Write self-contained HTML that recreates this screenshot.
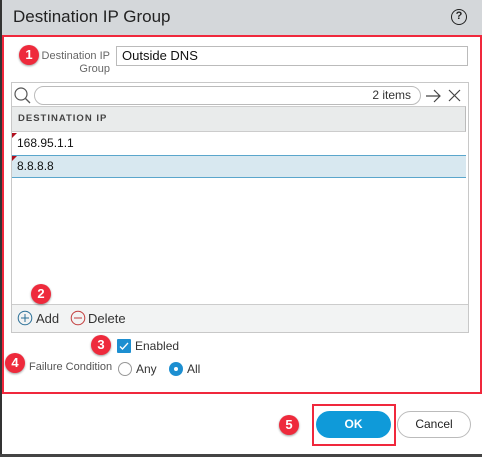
<!DOCTYPE html>
<html><head><style>
*{box-sizing:border-box;margin:0;padding:0}
body{width:482px;height:457px;position:relative;background:#fff;font-family:"Liberation Sans",sans-serif;overflow:hidden}
.a{position:absolute}
.badge{position:absolute;width:20px;height:20px;border-radius:50%;background:#ee2a3c;color:#fff;font-weight:bold;font-size:13px;text-align:center;line-height:20px;box-shadow:0 1px 2px rgba(0,0,0,.4)}
</style></head><body>
<div class="a" style="left:0;top:0;width:482px;height:35px;background:#d4d7da"></div>
<div class="a" style="left:13px;top:7px;font-size:17px;color:#222">Destination IP Group</div>
<div class="a" style="left:451px;top:9px;width:16px;height:16px;border:1.5px solid #222;border-radius:50%;font-size:11px;font-weight:bold;text-align:center;line-height:13px;color:#222">?</div>
<div class="a" style="left:0;top:0;width:2px;height:457px;background:#333"></div>
<div class="a" style="left:0;top:454px;width:482px;height:3px;background:#444"></div>
<div class="a" style="left:2px;top:35px;width:480px;height:359px;border:2.5px solid #f0283c"></div>
<div class="badge" style="left:19px;top:45px">1</div>
<div class="a" style="left:30px;top:50px;width:80px;text-align:right;font-size:11px;line-height:13px;color:#666">Destination IP<br>Group</div>
<div class="a" style="left:116px;top:46px;width:352px;height:20px;border:1px solid #bbb;font-size:13px;line-height:18px;padding-left:5px;color:#111">Outside DNS</div>
<div class="a" style="left:11px;top:82px;width:458px;height:251px;border:1px solid #c8c8c8"></div>
<svg class="a" style="left:13px;top:86px" width="20" height="20"><circle cx="8" cy="8" r="6" fill="none" stroke="#555" stroke-width="1.2"/><line x1="12.5" y1="12.5" x2="17" y2="17" stroke="#555" stroke-width="1.3"/></svg>
<div class="a" style="left:34px;top:86px;width:387px;height:19px;border:1px solid #bbb;border-radius:10px;font-size:12px;line-height:17px;text-align:right;padding-right:9px;color:#333">2 items</div>
<svg class="a" style="left:424px;top:87px" width="46" height="18"><path d="M2 9h14M10 3l6 6-6 6" fill="none" stroke="#444" stroke-width="1.2"/><path d="M25 3l11 11M36 3l-11 11" stroke="#444" stroke-width="1.2"/></svg>
<div class="a" style="left:12px;top:106px;width:454px;height:26px;background:#e9ebeb;border-top:1px solid #ccc;border-bottom:1px solid #ccc;border-right:1px solid #bbb;font-size:9.5px;font-weight:bold;letter-spacing:1px;color:#444;line-height:24px;padding-left:6px">DESTINATION IP</div>
<div class="a" style="left:12px;top:132px;width:454px;height:23px;font-size:12px;line-height:23px;padding-left:5px;color:#111">168.95.1.1</div>
<div class="a" style="left:12px;top:155px;width:454px;height:23px;background:#d8e8f0;border-top:1px solid #5aa6cc;border-bottom:1px solid #5aa6cc;font-size:12px;line-height:21px;padding-left:5px;color:#111">8.8.8.8</div>
<svg class="a" style="left:12px;top:133px" width="5" height="5"><path d="M0 0h5L0 5z" fill="#b0101e"/></svg>
<svg class="a" style="left:12px;top:156px" width="5" height="5"><path d="M0 0h5L0 5z" fill="#b0101e"/></svg>
<div class="a" style="left:12px;top:304px;width:456px;height:28px;background:#f2f3f3;border-top:1px solid #ccc"></div>
<svg class="a" style="left:17px;top:310px" width="16" height="16"><circle cx="8" cy="8" r="6.8" fill="none" stroke="#2a6f97" stroke-width="1"/><path d="M8 4v8M4 8h8" stroke="#2a6f97" stroke-width="1"/></svg>
<div class="a" style="left:36px;top:311px;font-size:13px;color:#333">Add</div>
<svg class="a" style="left:70px;top:310px" width="16" height="16"><circle cx="8" cy="8" r="6.8" fill="none" stroke="#c23b3b" stroke-width="1"/><path d="M4 8h8" stroke="#c23b3b" stroke-width="1"/></svg>
<div class="a" style="left:88px;top:311px;font-size:13px;color:#333">Delete</div>
<div class="badge" style="left:31px;top:284px">2</div>
<div class="badge" style="left:91px;top:335px">3</div>
<div class="a" style="left:117px;top:339px;width:14px;height:14px;background:#1d8fd1;border-radius:1px"></div>
<svg class="a" style="left:117px;top:339px" width="14" height="14"><path d="M3 7.5l2.5 2.5L11 4" fill="none" stroke="#fff" stroke-width="1.3"/></svg>
<div class="a" style="left:135px;top:339px;font-size:12px;color:#333">Enabled</div>
<div class="badge" style="left:5px;top:353px">4</div>
<div class="a" style="left:29px;top:361px;font-size:11px;color:#555">Failure Condition</div>
<div class="a" style="left:118px;top:362px;width:14px;height:14px;border:1px solid #999;border-radius:50%"></div>
<div class="a" style="left:136px;top:362px;font-size:12px;color:#333">Any</div>
<div class="a" style="left:169px;top:362px;width:14px;height:14px;background:#1d8fd1;border-radius:50%"></div>
<div class="a" style="left:174px;top:367px;width:4px;height:4px;background:#fff;border-radius:50%"></div>
<div class="a" style="left:187px;top:362px;font-size:12px;color:#333">All</div>
<div class="a" style="left:312px;top:404px;width:84px;height:42px;border:2px solid #f0283c"></div>
<div class="a" style="left:316px;top:411px;width:75px;height:27px;background:#0f9ad9;border-radius:14px;color:#fff;font-size:12px;font-weight:bold;text-align:center;line-height:27px">OK</div>
<div class="a" style="left:397px;top:411px;width:74px;height:27px;border:1px solid #bbb;border-radius:14px;color:#222;font-size:12px;text-align:center;line-height:25px">Cancel</div>
<div class="badge" style="left:279px;top:415px">5</div>
</body></html>
